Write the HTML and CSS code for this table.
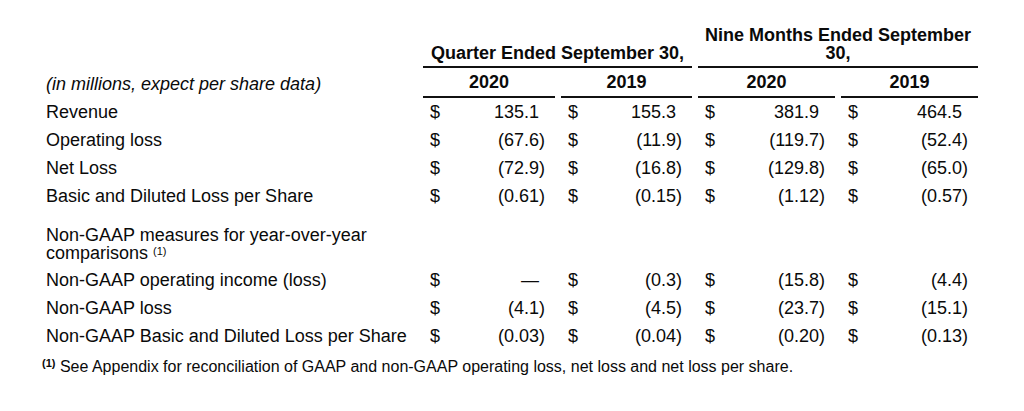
FILE: index.html
```html
<!DOCTYPE html>
<html lang="en">
<head>
<meta charset="utf-8">
<title>Financial summary</title>
<link rel="stylesheet" href="styles.css">
</head>
<body>
<div class="page">
  <table class="fin">
    <colgroup>
      <col class="c-label">
      <col class="c-q1">
      <col class="c-q2">
      <col class="c-n1">
      <col class="c-n2">
    </colgroup>
    <thead>
      <tr class="h1">
        <th class="blank"></th>
        <th colspan="2" class="grp">Quarter Ended September 30,</th>
        <th colspan="2" class="grp">Nine Months Ended September 30,</th>
      </tr>
      <tr class="h2">
        <th class="unit">(in millions, expect per share data)</th>
        <th class="yr">2020</th>
        <th class="yr">2019</th>
        <th class="yr">2020</th>
        <th class="yr">2019</th>
      </tr>
    </thead>
    <tbody>
      <tr>
        <td class="label">Revenue</td>
        <td class="amt"><div class="cell"><span>$</span><span class="pos">135.1</span></div></td>
        <td class="amt"><div class="cell"><span>$</span><span class="pos">155.3</span></div></td>
        <td class="amt"><div class="cell"><span>$</span><span class="pos">381.9</span></div></td>
        <td class="amt"><div class="cell"><span>$</span><span class="pos">464.5</span></div></td>
      </tr>
      <tr>
        <td class="label">Operating loss</td>
        <td class="amt"><div class="cell"><span>$</span><span>(67.6)</span></div></td>
        <td class="amt"><div class="cell"><span>$</span><span>(11.9)</span></div></td>
        <td class="amt"><div class="cell"><span>$</span><span>(119.7)</span></div></td>
        <td class="amt"><div class="cell"><span>$</span><span>(52.4)</span></div></td>
      </tr>
      <tr>
        <td class="label">Net Loss</td>
        <td class="amt"><div class="cell"><span>$</span><span>(72.9)</span></div></td>
        <td class="amt"><div class="cell"><span>$</span><span>(16.8)</span></div></td>
        <td class="amt"><div class="cell"><span>$</span><span>(129.8)</span></div></td>
        <td class="amt"><div class="cell"><span>$</span><span>(65.0)</span></div></td>
      </tr>
      <tr>
        <td class="label">Basic and Diluted Loss per Share</td>
        <td class="amt"><div class="cell"><span>$</span><span>(0.61)</span></div></td>
        <td class="amt"><div class="cell"><span>$</span><span>(0.15)</span></div></td>
        <td class="amt"><div class="cell"><span>$</span><span>(1.12)</span></div></td>
        <td class="amt"><div class="cell"><span>$</span><span>(0.57)</span></div></td>
      </tr>
      <tr class="section">
        <td class="label multi">Non-GAAP measures for year-over-year comparisons <sup class="ref">(1)</sup></td>
        <td></td><td></td><td></td><td></td>
      </tr>
      <tr>
        <td class="label">Non-GAAP operating income (loss)</td>
        <td class="amt"><div class="cell"><span>$</span><span class="pos">—</span></div></td>
        <td class="amt"><div class="cell"><span>$</span><span>(0.3)</span></div></td>
        <td class="amt"><div class="cell"><span>$</span><span>(15.8)</span></div></td>
        <td class="amt"><div class="cell"><span>$</span><span>(4.4)</span></div></td>
      </tr>
      <tr>
        <td class="label">Non-GAAP loss</td>
        <td class="amt"><div class="cell"><span>$</span><span>(4.1)</span></div></td>
        <td class="amt"><div class="cell"><span>$</span><span>(4.5)</span></div></td>
        <td class="amt"><div class="cell"><span>$</span><span>(23.7)</span></div></td>
        <td class="amt"><div class="cell"><span>$</span><span>(15.1)</span></div></td>
      </tr>
      <tr>
        <td class="label">Non-GAAP Basic and Diluted Loss per Share</td>
        <td class="amt"><div class="cell"><span>$</span><span>(0.03)</span></div></td>
        <td class="amt"><div class="cell"><span>$</span><span>(0.04)</span></div></td>
        <td class="amt"><div class="cell"><span>$</span><span>(0.20)</span></div></td>
        <td class="amt"><div class="cell"><span>$</span><span>(0.13)</span></div></td>
      </tr>
    </tbody>
  </table>
  <p class="note"><sup class="note-ref">(1)</sup> See Appendix for reconciliation of GAAP and non-GAAP operating loss, net loss and net loss per share.</p>
</div>
</body>
</html>
```

FILE: styles.css
```css
html, body {
  margin: 0;
  padding: 0;
  background: #ffffff;
}

body {
  font-family: "Liberation Sans", Arial, sans-serif;
  color: #0a0a0a;
}

.page {
  padding: 26px 0 0 40px;
}

.fin {
  border-collapse: separate;
  border-spacing: 6px 0;
  table-layout: fixed;
  width: 944px;
  font-size: 18px;
}

.c-label { width: 371px; }
.c-q1 { width: 132px; }
.c-q2 { width: 131px; }
.c-n1 { width: 137px; }
.c-n2 { width: 137px; }

.fin th,
.fin td {
  padding: 0;
}

.fin .h1 th {
  line-height: 18px;
  vertical-align: bottom;
  padding: 0 4px 4px;
  font-weight: bold;
  text-align: center;
}

.fin .h1 th.grp {
  border-bottom: 2px solid #111;
}

.fin .h1 th.blank {
  border: none;
}

.fin .h2 th {
  line-height: 28px;
  vertical-align: bottom;
}

.fin .h2 th.unit {
  text-align: left;
  font-style: italic;
  font-weight: normal;
}

.fin .h2 th.yr {
  text-align: center;
  font-weight: bold;
  border-bottom: 2px solid #111;
}

.fin tbody td {
  line-height: 28px;
  vertical-align: middle;
}

.fin td.label {
  text-align: left;
  white-space: nowrap;
}

.fin td.label.multi {
  white-space: normal;
  line-height: 18px;
  padding: 16px 0 4px;
}

.ref {
  font-size: 11px;
  line-height: 0;
  vertical-align: 4px;
}

.fin td.amt {
  padding: 0 10px 0 7px;
}

.cell {
  display: flex;
  justify-content: space-between;
}

.pos {
  padding-right: 6px;
}

.note {
  margin: 7px 0 0 2px;
  font-size: 16px;
  line-height: 20px;
}

.note-ref {
  font-size: 11px;
  font-weight: bold;
  line-height: 0;
  vertical-align: 5px;
}
```
